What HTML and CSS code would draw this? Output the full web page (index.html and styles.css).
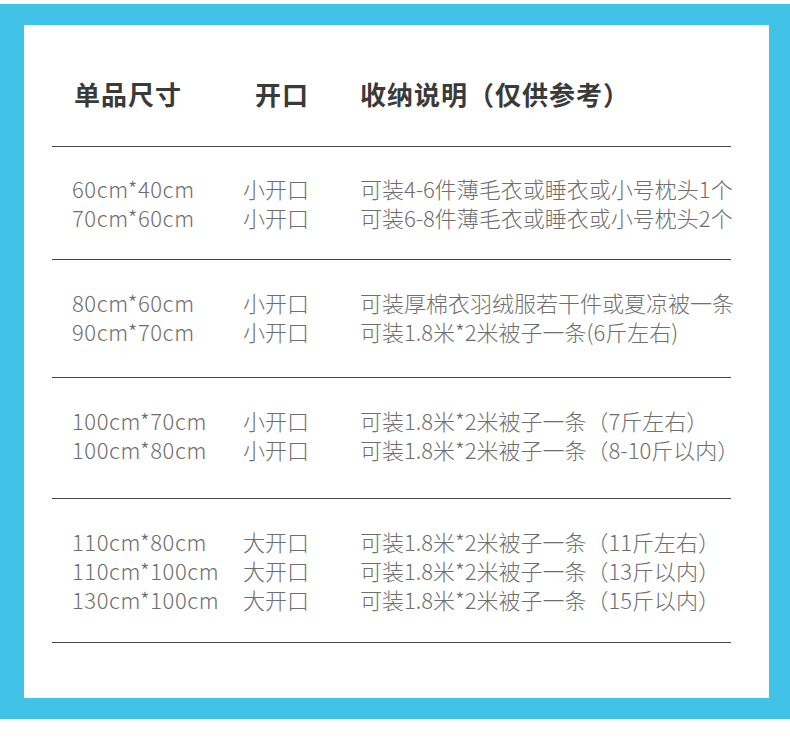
FILE: index.html
```html
<!DOCTYPE html>
<html lang="zh-CN">
<head>
<meta charset="utf-8">
<title>尺寸说明</title>
<link rel="stylesheet" href="styles.css">
</head>
<body>
<div class="frame">
  <div class="panel">
    <div class="table">
      <div class="head">
        <div>单品尺寸</div>
        <div>开口</div>
        <div>收纳说明（仅供参考）</div>
      </div>
      <div class="group g1">
        <div class="size">60cm*40cm</div><div>小开口</div><div>可装4-6件薄毛衣或睡衣或小号枕头1个</div>
        <div class="size">70cm*60cm</div><div>小开口</div><div>可装6-8件薄毛衣或睡衣或小号枕头2个</div>
      </div>
      <div class="group g2">
        <div class="size">80cm*60cm</div><div>小开口</div><div>可装厚棉衣羽绒服若干件或夏凉被一条</div>
        <div class="size">90cm*70cm</div><div>小开口</div><div>可装1.8米*2米被子一条(6斤左右)</div>
      </div>
      <div class="group g3">
        <div class="size">100cm*70cm</div><div>小开口</div><div>可装1.8米*2米被子一条（7斤左右）</div>
        <div class="size">100cm*80cm</div><div>小开口</div><div>可装1.8米*2米被子一条（8-10斤以内）</div>
      </div>
      <div class="group g4">
        <div class="size">110cm*80cm</div><div>大开口</div><div>可装1.8米*2米被子一条（11斤左右）</div>
        <div class="size">110cm*100cm</div><div>大开口</div><div>可装1.8米*2米被子一条（13斤以内）</div>
        <div class="size">130cm*100cm</div><div>大开口</div><div>可装1.8米*2米被子一条（15斤以内）</div>
      </div>
    </div>
  </div>
</div>
</body>
</html>
```

FILE: styles.css
```css
html, body {
  margin: 0;
  padding: 0;
  background: #ffffff;
}
body {
  width: 790px;
  height: 740px;
  padding-top: 4px;
  box-sizing: border-box;
  font-family: "Noto Sans CJK SC", "Noto Sans", sans-serif;
}
.frame {
  background: #40c3e6;
  height: 715px;
  padding: 21px 21px 21px 24px;
  box-sizing: border-box;
}
.panel {
  background: #ffffff;
  height: 673px;
  padding-left: 28px;
}
.table {
  width: 679px;
}
.head {
  display: grid;
  grid-template-columns: 181px 105px 1fr;
  padding: 54px 0 37px 22px;
  font-size: 26px;
  line-height: 30px;
  font-weight: 700;
  color: #3a3a3a;
  letter-spacing: 1px;
}
.group {
  display: grid;
  grid-template-columns: 171px 117px 1fr;
  grid-auto-rows: 29px;
  padding-left: 20px;
  border-top: 1px solid #444;
  font-size: 22px;
  line-height: 29px;
  font-weight: 300;
  color: #6e6e6e;
  white-space: nowrap;
  box-sizing: border-box;
}
.size {
  letter-spacing: 0.55px;
}
.g1 { padding-top: 27px; height: 113px; }
.g2 { padding-top: 28px; height: 118px; }
.g3 { padding-top: 28px; height: 121px; }
.g4 {
  padding-top: 28px;
  height: 145px;
  border-bottom: 1px solid #444;
}
```
